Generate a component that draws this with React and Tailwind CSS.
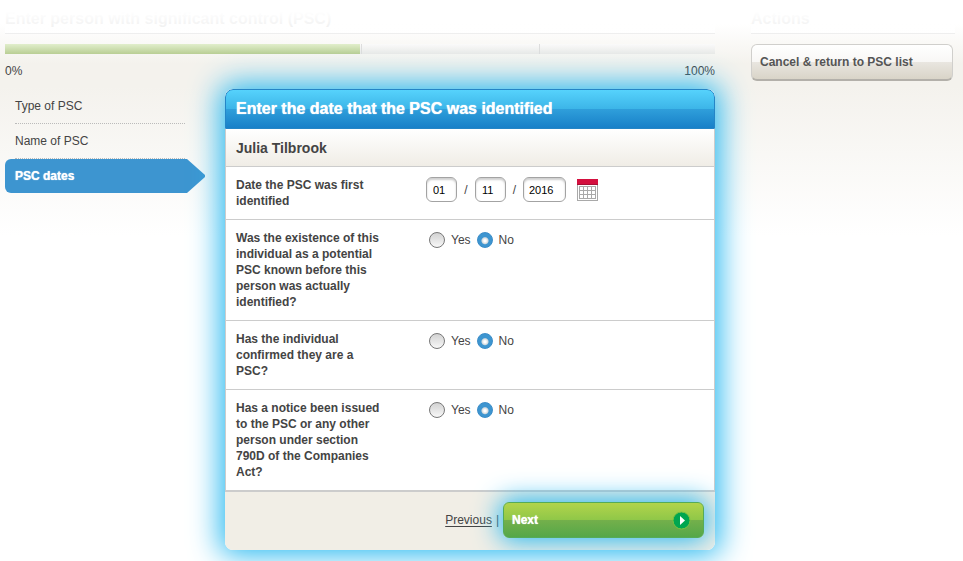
import { useState } from 'react';
import clsx from 'clsx';

const STEPS = ['Type of PSC', 'Name of PSC', 'PSC dates'];

const QUESTIONS = [
  {
    id: 'known',
    text: 'Was the existence of this individual as a potential PSC known before this person was actually identified?',
  },
  { id: 'confirmed', text: 'Has the individual confirmed they are a PSC?' },
  {
    id: 'notice',
    text: 'Has a notice been issued to the PSC or any other person under section 790D of the Companies Act?',
  },
];

function CalendarIcon() {
  return (
    <svg width="21" height="22" viewBox="0 0 21 22" shapeRendering="crispEdges" aria-hidden="true">
      <rect width="21" height="22" fill="#a9a9a9" />
      <rect x="1" y="6" width="19" height="15" fill="#fff" />
      <rect width="21" height="6" fill="#d4103f" />
      <rect y="5" width="21" height="1" fill="#a80f35" />
      <rect x="2" y="7" width="17" height="13" fill="#a9a9a9" />
      {[8, 12, 16].map((y) =>
        [3, 7, 11, 15].map((x) => <rect key={`${x}-${y}`} x={x} y={y} width="3" height="3" fill="#fff" />)
      )}
    </svg>
  );
}

function DateInput({ label, value, onChange, wide }) {
  return (
    <input
      type="text"
      aria-label={label}
      value={value}
      onChange={(e) => onChange(e.target.value)}
      className={clsx(
        'h-[25px] rounded-md border border-[#a3a3a3] bg-white px-1.5 text-[11px] text-black inset-shadow-[0_2px_2px_#cfcfcf] focus:outline-none',
        wide ? 'w-[43px] pl-[5px]' : 'w-[31px]'
      )}
    />
  );
}

function Radio({ name, label, checked, onChange }) {
  return (
    <label className="flex items-center gap-1.5">
      <input
        type="radio"
        name={name}
        checked={checked}
        onChange={onChange}
        className="size-4 appearance-none rounded-full border border-[#777] bg-linear-to-b from-[#d2d2d2] to-[#f8f8f8] checked:border-[#3a8cc8] checked:bg-[radial-gradient(circle_at_50%_55%,#fff_0_1px,#d3dade_3px,#3d95d0_4px)]"
      />
      {label}
    </label>
  );
}

function Row({ label, children, last }) {
  return (
    <div className={clsx('flex gap-10 px-2.5 py-2.5 border-[#ccc]', last ? 'border-b-2' : 'border-b')}>
      <div className="w-[150px] shrink-0 font-bold leading-4">{label}</div>
      {children}
    </div>
  );
}

export default function App() {
  const [date, setDate] = useState({ day: '01', month: '11', year: '2016' });
  const [answers, setAnswers] = useState({ known: 'No', confirmed: 'No', notice: 'No' });

  const setPart = (part) => (value) => setDate({ ...date, [part]: value });

  return (
    <div className="bg-[linear-gradient(to_bottom,#fff_0,#fff_24px,#f4f2ed_64px,#f4f2ed_86px,#fff_236px)] pb-[11px] font-['Liberation_Sans',Arial,sans-serif] text-xs text-[#444]">
      <div className="flex gap-9 pl-[5px] pr-2">
        <main className="min-w-0 flex-1">
          <div className="relative mb-2.5 h-[34px] border-b border-[#eee] pt-2.5">
            <h1 className="text-base leading-[18px] font-bold">Enter person with significant control (PSC)</h1>
            <div className="absolute inset-0 bg-linear-to-b from-white from-35% to-white/90" />
          </div>

          <div className="flex h-2.5 bg-linear-to-b from-[#fafafa] to-[#e9e9e7]" role="progressbar" aria-valuenow={50}>
            <div className="w-1/2 bg-linear-to-b from-[#e1eecb] to-[#b9ce94]" />
            <div className="ml-px w-1/4 border-l border-[#ddd]" />
            <div className="flex-1 border-l border-[#ddd]" />
          </div>
          <div className="flex h-[35px] justify-between pt-2 leading-[18px]">
            <span>0%</span>
            <span>100%</span>
          </div>

          <div className="flex gap-5">
            <nav className="w-[200px] shrink-0">
              {STEPS.map((step, i) =>
                i === 2 ? (
                  <a key={step} href="#" aria-current="step" className="flex h-[34px] font-bold text-white">
                    <span className="flex-1 rounded-l-md bg-[#3d95d0] px-2.5 py-2 leading-[18px] text-shadow-[0_0_1px_#fff]">
                      {step}
                    </span>
                    <svg width="19" height="34" viewBox="0 0 19 34" aria-hidden="true">
                      <path d="M0 0h1L19 16v2L1 34H0z" fill="#3d95d0" />
                    </svg>
                  </a>
                ) : (
                  <a
                    key={step}
                    href="#"
                    className="mr-5 ml-2.5 block h-[35px] border-b border-dotted border-[#bbb] py-2 leading-[18px]"
                  >
                    {step}
                  </a>
                )
              )}
            </nav>

            <form
              onSubmit={(e) => e.preventDefault()}
              className="min-w-0 flex-1 overflow-hidden rounded-lg bg-white shadow-[0_0_30px_5px_#25b8f0]"
            >
              <h2 className="h-10 rounded-t-lg border border-[#2585c6] bg-[linear-gradient(to_bottom,#56d2fc,#3cb5e8_50%,#2f9fdb_50%,#1880c8)] px-2.5 text-base leading-[37px] font-bold text-white text-shadow-[0_0_1px_#fff]">
                Enter the date that the PSC was identified
              </h2>
              <div className="border-x border-[#ccc]">
                <h3 className="h-[38px] border-b border-[#ccc] bg-linear-to-b from-white to-[#f0ede6] px-2.5 text-sm leading-[38px] font-bold">
                  Julia Tilbrook
                </h3>

                <Row label="Date the PSC was first identified">
                  <div className="flex h-[25px] items-center">
                    <DateInput label="Day" value={date.day} onChange={setPart('day')} />
                    <span className="w-[18px] text-center">/</span>
                    <DateInput label="Month" value={date.month} onChange={setPart('month')} />
                    <span className="w-[17px] text-center">/</span>
                    <DateInput label="Year" value={date.year} onChange={setPart('year')} wide />
                    <button type="button" aria-label="Choose date" className="ml-[11px]">
                      <CalendarIcon />
                    </button>
                  </div>
                </Row>

                {QUESTIONS.map((q, i) => (
                  <Row key={q.id} label={q.text} last={i === QUESTIONS.length - 1}>
                    <div role="radiogroup" aria-label={q.text} className="ml-[3px] flex h-5 items-center gap-1.5 leading-5">
                      {['Yes', 'No'].map((option) => (
                        <Radio
                          key={option}
                          name={q.id}
                          label={option}
                          checked={answers[q.id] === option}
                          onChange={() => setAnswers({ ...answers, [q.id]: option })}
                        />
                      ))}
                    </div>
                  </Row>
                ))}
              </div>

              <div className="flex h-[58px] items-center justify-end gap-1 bg-[#f1eee6] pr-[11px] pb-0.5">
                <a href="#" className="underline underline-offset-2">
                  Previous
                </a>
                <span>|</span>
                <button
                  type="submit"
                  className="flex h-9 w-[201px] items-center justify-between rounded-md border border-[#55ab58] bg-[linear-gradient(to_bottom,#b2d44b,#8fc748_50%,#74b04b_50%,#55a748)] pr-3 pl-2 font-bold text-white shadow-[0_0_26px_3px_#25b8f0] text-shadow-[0_0_1px_#fff]"
                >
                  Next
                  <svg width="19" height="19" viewBox="0 0 19 19" aria-hidden="true">
                    <circle cx="9.5" cy="9.5" r="8.5" fill="#00a650" stroke="#7dc242" />
                    <path d="M8 5v9l5-4.500z" fill="#fff" />
                  </svg>
                </button>
              </div>
            </form>
          </div>
        </main>

        <aside className="w-[204px] shrink-0">
          <div className="relative mb-2.5 h-[34px] border-b border-[#eee] pt-2.5">
            <h2 className="text-base leading-[18px] font-bold">Actions</h2>
            <div className="absolute inset-0 bg-linear-to-b from-white from-35% to-white/90" />
          </div>
          <button
            type="button"
            className="h-[37px] w-[202px] rounded-md border border-b-2 border-[#d0cfcc] border-b-[#b3b0aa] bg-[linear-gradient(to_bottom,#fff,#f8f7f5_50%,#e9e6e0_50%,#d9d4c8)] px-2 text-left font-bold text-[#555]"
          >
            Cancel &amp; return to PSC list
          </button>
        </aside>
      </div>
    </div>
  );
}
